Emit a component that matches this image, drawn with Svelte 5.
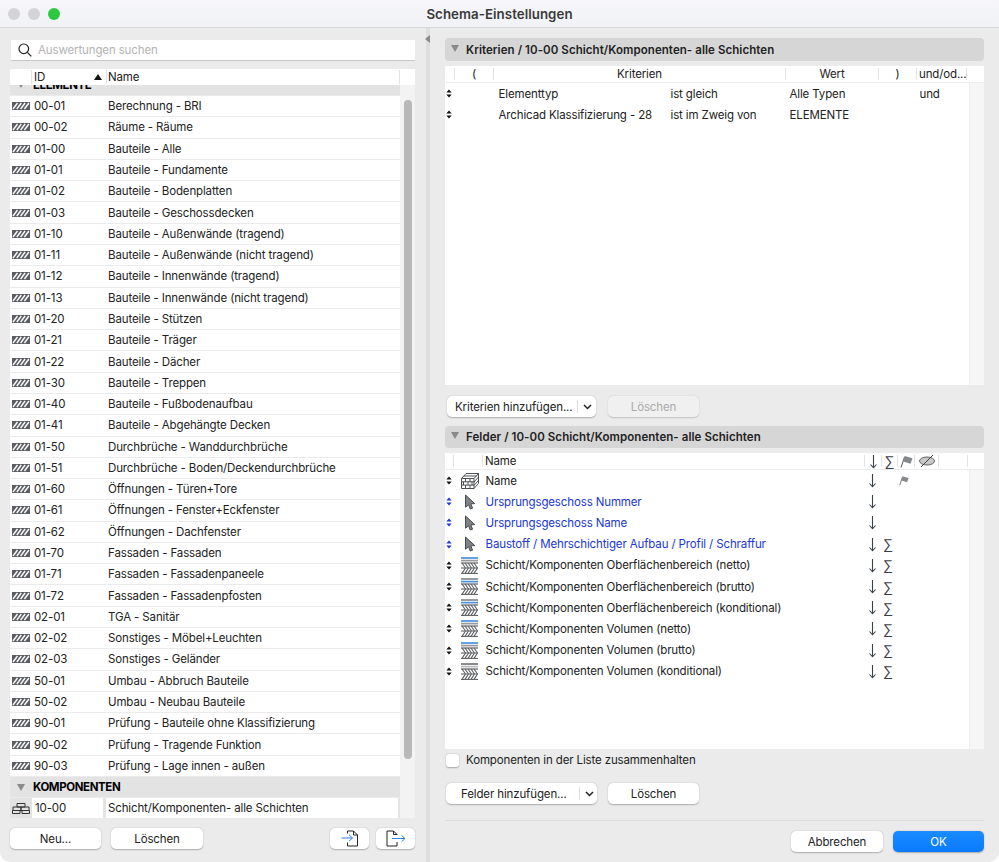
<script>
  const rows = [
    ['00-01','Berechnung - BRI'],['00-02','Räume - Räume'],['01-00','Bauteile - Alle'],['01-01','Bauteile - Fundamente'],
    ['01-02','Bauteile - Bodenplatten'],['01-03','Bauteile - Geschossdecken'],['01-10','Bauteile - Außenwände (tragend)'],
    ['01-11','Bauteile - Außenwände (nicht tragend)'],['01-12','Bauteile - Innenwände (tragend)'],['01-13','Bauteile - Innenwände (nicht tragend)'],
    ['01-20','Bauteile - Stützen'],['01-21','Bauteile - Träger'],['01-22','Bauteile - Dächer'],['01-30','Bauteile - Treppen'],
    ['01-40','Bauteile - Fußbodenaufbau'],['01-41','Bauteile - Abgehängte Decken'],['01-50','Durchbrüche - Wanddurchbrüche'],
    ['01-51','Durchbrüche - Boden/Deckendurchbrüche'],['01-60','Öffnungen - Türen+Tore'],['01-61','Öffnungen - Fenster+Eckfenster'],
    ['01-62','Öffnungen - Dachfenster'],['01-70','Fassaden - Fassaden'],['01-71','Fassaden - Fassadenpaneele'],['01-72','Fassaden - Fassadenpfosten'],
    ['02-01','TGA - Sanitär'],['02-02','Sonstiges - Möbel+Leuchten'],['02-03','Sonstiges - Geländer'],['50-01','Umbau - Abbruch Bauteile'],
    ['50-02','Umbau - Neubau Bauteile'],['90-01','Prüfung - Bauteile ohne Klassifizierung'],['90-02','Prüfung - Tragende Funktion'],['90-03','Prüfung - Lage innen - außen']
  ];
  const criteria = [
    ['Elementtyp','ist gleich','Alle Typen','und'],
    ['Archicad Klassifizierung - 28','ist im Zweig von','ELEMENTE','']
  ];
  const fields = [
    {n:'Name',icon:'brick',flag:true},
    {n:'Ursprungsgeschoss Nummer',icon:'cursor',blue:true},
    {n:'Ursprungsgeschoss Name',icon:'cursor',blue:true},
    {n:'Baustoff / Mehrschichtiger Aufbau / Profil / Schraffur',icon:'cursor',blue:true,sum:true},
    {n:'Schicht/Komponenten Oberflächenbereich (netto)',icon:'layer',top:'#4a90e2',mid:'#9a9a9a',sum:true},
    {n:'Schicht/Komponenten Oberflächenbereich (brutto)',icon:'layer',top:'#8a8a8a',mid:'#4a90e2',sum:true},
    {n:'Schicht/Komponenten Oberflächenbereich (konditional)',icon:'layer',top:'#8a8a8a',mid:'#4a90e2',sum:true},
    {n:'Schicht/Komponenten Volumen (netto)',icon:'layer',top:'#4a90e2',mid:'#9a9a9a',sum:true},
    {n:'Schicht/Komponenten Volumen (brutto)',icon:'layer',top:'#4a90e2',mid:'#9a9a9a',sum:true},
    {n:'Schicht/Komponenten Volumen (konditional)',icon:'layer',top:'#777',mid:'#bbb',sum:true}
  ];
</script>

{#snippet updown(color)}
  <svg class="updown" width="6" height="9" viewBox="0 0 6 9"><path d="M3 0.5 L5.7 3.6 H0.3 Z M3 8.5 L5.7 5.4 H0.3 Z" fill={color}/></svg>
{/snippet}
{#snippet down()}
  <svg width="9" height="15" viewBox="0 0 9 15"><path d="M4.5 1 V13.5 M1.5 10.5 L4.5 13.8 L7.5 10.5" fill="none" stroke="#3a4048" stroke-width="1.1"/></svg>
{/snippet}
{#snippet flag()}
  <svg width="13" height="13" viewBox="0 0 13 13"><path d="M1 12.5 L4.5 2" stroke="#444" stroke-width="0.9" fill="none"/><path d="M4.6 1 L12.5 3.2 L10.5 8.8 L3.2 6.5 Z" fill="#85888c"/></svg>
{/snippet}
{#snippet hatch()}
  <svg class="hatch" width="18" height="8" viewBox="0 0 18 8">
    <rect x="0" y="0" width="18" height="8" fill="#5a5d62"/>
    <path d="M1 7 L5.5 1 M4.8 7 L9.3 1 M8.6 7 L13.1 1 M12.4 7 L16.9 1" stroke="#f6f6f6" stroke-width="1.5"/>
  </svg>
{/snippet}
{#snippet layer(top, mid)}
  <svg width="17" height="17" viewBox="0 0 17 17">
    <path d="M0 1 H17" stroke={top} stroke-width="1.7"/>
    <path d="M0 3.6 H17" stroke={mid} stroke-width="1.7"/>
    <path d="M0 6 H17" stroke="#444" stroke-width="1"/>
    <path d="M0 11 H17 M0 16.4 H17" stroke="#555" stroke-width="1"/>
    <path d="M1 6 L4.5 11 M4 6 L7.5 11 M7 6 L10.5 11 M10 6 L13.5 11 M13 6 L16.5 11 M1 16.4 L4.5 11 M4 16.4 L7.5 11 M7 16.4 L10.5 11 M10 16.4 L13.5 11 M13 16.4 L16.5 11" stroke="#5c5f64" stroke-width="1.1"/>
  </svg>
{/snippet}
{#snippet cursor()}
  <svg width="12" height="16" viewBox="0 0 12 16"><path d="M1.5 1 L10.8 9.6 L6.8 9.8 L8.6 14.2 L6.2 15 L4.6 10.8 L1.5 13.2 Z" fill="#7f8387" stroke="#3c3f44" stroke-width="0.9" stroke-linejoin="round"/></svg>
{/snippet}
{#snippet brick()}
  <svg width="18" height="16" viewBox="0 0 18 16" fill="none" stroke="#3a3d42" stroke-width="0.9">
    <path d="M0.5 5.5 H13 V15.5 H0.5 Z M0.5 5.5 L5 0.5 H17.5 L13 5.5 M17.5 0.5 V10.5 L13 15.5"/>
    <path d="M0.5 8.8 H13 M0.5 12.1 H13 M4.5 5.5 V8.8 M9 5.5 V8.8 M2.5 8.8 V12.1 M7 8.8 V12.1 M11 8.8 V12.1 M4.5 12.1 V15.5 M9 12.1 V15.5 M3 3 H15.5 M13 9 L17.5 4 M13 12.4 L17.5 7.4"/>
  </svg>
{/snippet}

<div class="window">
  <header class="titlebar">
    <div class="lights"><i class="light off"></i><i class="light off"></i><i class="light green"></i></div>
    <div class="title">Schema-Einstellungen</div>
  </header>

  <div class="main">
    <section class="left">
      <div class="search">
        <svg width="14" height="14" viewBox="0 0 14 14" fill="none" stroke="#222" stroke-width="1.2"><circle cx="5.8" cy="5.8" r="4.8"/><path d="M9.3 9.3 L13.3 13.3"/></svg>
        <span>Auswertungen suchen</span>
      </div>

      <div class="list">
        <div class="list-head">
          <span class="lh-id">ID</span>
          <span class="lh-sort"><svg width="8" height="6" viewBox="0 0 8 6"><path d="M4 0 L8 6 H0 Z" fill="#111"/></svg></span>
          <span class="lh-name">Name</span>
        </div>
        <div class="list-body">
          <div class="list-main">
            <div class="scroller">
              <div class="group first"><span class="tri"></span><b>ELEMENTE</b></div>
              {#each rows as r}
                <div class="row">
                  <span class="ic">{@render hatch()}</span>
                  <span class="id">{r[0]}</span>
                  <span>{r[1]}</span>
                </div>
              {/each}
            </div>
            <div class="group"><span class="tri"></span><b>KOMPONENTEN</b></div>
            <div class="sel">
              <span class="sel-ic">
                <svg width="18" height="11" viewBox="0 0 18 11" fill="none" stroke="#333" stroke-width="1"><path d="M5 0.5 H13 V4 H5 Z M1 4 H9 V7.5 H1 Z M9 4 H17 V7.5 H9 Z M0.5 7.5 H8 V10.5 H0.5 Z M10 7.5 H17.5 V10.5 H10 Z"/></svg>
              </span>
              <span class="sel-id">10-00</span>
              <span class="sel-name">Schicht/Komponenten- alle Schichten</span>
            </div>
          </div>
          <div class="track"><div class="thumb"></div></div>
        </div>
      </div>

      <div class="left-actions">
        <button class="btn b-neu">Neu...</button>
        <button class="btn b-del">Löschen</button>
        <span class="spacer"></span>
        <button class="btn b-ic">
          <svg width="18" height="17" viewBox="0 0 18 17" fill="none"><path d="M6.5 3.5 V1 H12.5 L16.5 5 V16 H6.5 V12.5 M12.5 1 V5 H16.5" stroke="#222" stroke-width="1"/><path d="M0.5 8 H11.5 M8 4.8 L11.5 8 L8 11.2" stroke="#2f7fe8" stroke-width="1"/></svg>
        </button>
        <button class="btn b-ic">
          <svg width="20" height="17" viewBox="0 0 20 17" fill="none"><path d="M11 5 V4.5 L7.5 1 H1 V16 H11 V12 M7.5 1 V4.5 H11" stroke="#222" stroke-width="1"/><path d="M6 8.5 H19 M15.5 5.3 L19 8.5 L15.5 11.7" stroke="#2f7fe8" stroke-width="1"/></svg>
        </button>
      </div>
    </section>

    <div class="divider"><svg width="5" height="8" viewBox="0 0 5 8"><path d="M0 4 L5 0 V8 Z" fill="#8a8a8a"/></svg></div>

    <section class="right">
      <div class="bar"><span class="tri"></span><b>Kriterien / 10-00 Schicht/Komponenten- alle Schichten</b></div>
      <div class="table crit">
        <div class="thead chead">
          <span class="c"></span><span class="c ctr">(</span><span class="c ctr">Kriterien</span><span class="c ctr">Wert</span><span class="c ctr">)</span><span class="c und">und/od...</span><span class="c"></span>
        </div>
        <div class="tbody">
          <div class="tmain">
            {#each criteria as c}
              <div class="crow">
                <span class="h">{@render updown('#111')}</span>
                <span>{c[0]}</span><span>{c[1]}</span><span>{c[2]}</span><span>{c[3]}</span>
              </div>
            {/each}
          </div>
          <div class="strip"></div>
        </div>
      </div>
      <div class="actions a1">
        <div class="btn split s1"><span class="lbl">Kriterien hinzufügen...</span><i></i><svg width="9" height="6" viewBox="0 0 9 6"><path d="M1 1 L4.5 4.5 L8 1" fill="none" stroke="#222" stroke-width="1.5"/></svg></div>
        <button class="btn dis">Löschen</button>
      </div>

      <div class="bar b2"><span class="tri"></span><b>Felder / 10-00 Schicht/Komponenten- alle Schichten</b></div>
      <div class="table fields">
        <div class="thead fhead">
          <span class="c"></span><span class="c"></span><span class="c nm">Name</span>
          <span class="c mid">{@render down()}</span><span class="c mid sum">∑</span><span class="c mid">{@render flag()}</span>
          <span class="c mid">
            <svg width="18" height="14" viewBox="0 0 18 14"><ellipse cx="9" cy="7" rx="7.5" ry="4" fill="#c9c9c9" stroke="#555" stroke-width="0.9"/><path d="M3 13 L15 1" stroke="#444" stroke-width="1"/></svg>
          </span>
          <span class="c"></span><span class="c"></span>
        </div>
        <div class="tbody">
          <div class="tmain">
            {#each fields as f}
              <div class="frow" class:blue={f.blue}>
                <span class="h">{@render updown(f.blue ? '#2036d8' : '#111')}</span>
                <span class="fi">
                  {#if f.icon === 'brick'}{@render brick()}{:else if f.icon === 'cursor'}{@render cursor()}{:else}{@render layer(f.top, f.mid)}{/if}
                </span>
                <span class="fn">{f.n}</span>
                <span class="mid">{@render down()}</span>
                <span class="mid sum">{f.sum ? '∑' : ''}</span>
                <span class="mid">{#if f.flag}{@render flag()}{/if}</span>
              </div>
            {/each}
          </div>
          <div class="strip"></div>
        </div>
      </div>
      <label class="check"><i></i><span>Komponenten in der Liste zusammenhalten</span></label>
      <div class="actions a2">
        <div class="btn split s2"><span class="lbl">Felder hinzufügen...</span><i></i><svg width="9" height="6" viewBox="0 0 9 6"><path d="M1 1 L4.5 4.5 L8 1" fill="none" stroke="#222" stroke-width="1.5"/></svg></div>
        <button class="btn plain">Löschen</button>
      </div>
      <div class="sep"></div>
      <div class="footer">
        <button class="btn cancel">Abbrechen</button>
        <button class="btn ok">OK</button>
      </div>
    </section>
  </div>
</div>

<style>
  :global(body) { margin: 0; background: #fff; }
  .window {
    width: 999px; height: 862px; background: #ebebeb; border-radius: 0 0 10px 10px; overflow: hidden;
    display: flex; flex-direction: column; font-family: Inter, "Liberation Sans", sans-serif; font-size: 11.5px; letter-spacing: -0.13px; color: #222; box-sizing: border-box;
  }
  .titlebar {
    height: 28px; flex: none; box-sizing: border-box; background: linear-gradient(#f6f6f9, #f1f2f6); border-bottom: 1px solid #d6d6d6;
    display: flex; align-items: center; position: relative;
  }
  .lights { display: flex; gap: 8px; padding-left: 8px; }
  .light { width: 12px; height: 12px; border-radius: 50%; display: block; }
  .off { background: #d4d4d8; border: 0; }
  .green { background: #2cc840; }
  .title { position: absolute; left: 0; right: 0; text-align: center; font-weight: 600; font-size: 13.3px; letter-spacing: 0.05px; color: #3a3a3a; }
  .main { flex: 1; display: flex; min-height: 0; }

  .left { width: 426px; flex: none; box-sizing: border-box; padding: 12px 11px 0 10px; display: flex; flex-direction: column; }
  .search {
    height: 20px; margin-left: 1px; background: #fff; border-bottom: 1px solid #c8c8c8; box-sizing: content-box; display: flex; align-items: center; gap: 6px; padding-left: 7px;
    color: #b3b3b3;
  }
  .list { margin-top: 8px; width: 405px; }
  .list-head { height: 16px; background: #fff; display: grid; grid-template-columns: 22px 63px 11px 1fr; align-items: center; position: relative; }
  .lh-id { grid-column: 2; border-left: 1px solid #e2e2e2; padding-left: 2px; margin-left: -1px; }
  .lh-sort { grid-column: 3; display: flex; align-items: center; margin-left: -1px; }
  .lh-name { grid-column: 4; border-left: 1px solid #e2e2e2; padding-left: 1px; border-right: 1px solid #e2e2e2; margin-right: 15px; }
  .list-body { display: flex; height: 733px; }
  .list-main { width: 390px; display: flex; flex-direction: column; }
  .scroller { height: 692px; overflow: hidden; }
  .group { height: 20px; background: #e3e3e3; display: flex; align-items: center; gap: 8px; padding-left: 7px; font-size: 11.5px; color: #000; flex: none; }
  .group b { font-weight: 700; letter-spacing: -0.4px; }
  .group.first { margin-top: -11px; height: 21px; margin-bottom: 1px; }
  .tri { width: 0; height: 0; border-left: 4.5px solid transparent; border-right: 4.5px solid transparent; border-top: 7px solid #8a8a8a; display: block; flex: none; }
  .row {
    height: 20.29px; margin-bottom: 1px; background: #fff; display: grid; grid-template-columns: 24px 74px 1fr; align-items: center;
  }
  .ic { display: flex; padding-left: 2px; }
  .hatch { display: block; }
  .sel { height: 20px; margin-top: 1px; flex: none; display: grid; grid-template-columns: 22px 71px 295px; column-gap: 0; background: #e3e3e3; align-items: stretch; }
  .sel-ic { display: flex; align-items: center; justify-content: center; }
  .sel-id { background: #fff; padding-left: 3px; display: flex; align-items: center; }
  .sel-name { background: #fff; margin-left: 3px; padding-left: 2px; display: flex; align-items: center; }
  .track { width: 15px; background: #f3f3f3; position: relative; box-sizing: border-box; padding: 15px 3px 0 4px; }
  .thumb { height: 659px; background: #b9b9b9; border-radius: 4px; }

  .left-actions { display: flex; margin-top: 10px; align-items: center; width: 405px; }
  .btn {
    height: 21px; background: #fff; border: 0; border-radius: 5px; box-shadow: 0 0.5px 1.5px rgba(0,0,0,.28); font: inherit; letter-spacing: inherit; color: #222; padding: 0;
    display: flex; align-items: center; justify-content: center; box-sizing: border-box;
  }
  .b-neu { width: 91px; }
  .b-del { width: 92px; margin-left: 10px; }
  .spacer { flex: 1; }
  .b-ic { width: 39px; margin-left: 7px; }

  .divider { width: 4px; flex: none; background: #dedede; position: relative; }
  .divider svg { position: absolute; left: -1px; top: 7px; }

  .right { flex: 1; box-sizing: border-box; padding: 10px 15px 0 15px; display: flex; flex-direction: column; min-width: 0; }
  .bar { height: 23px; flex: none; background: #d6d6d6; border-radius: 4px; display: flex; align-items: center; gap: 7px; padding-left: 6px; color: #222; }
  .bar b { font-weight: 600; letter-spacing: 0.07px; }
  .bar .tri { margin-top: -3px; }
  .table { display: flex; flex-direction: column; margin-top: 5px; flex: none; }
  .thead { height: 16px; background: #fff; display: grid; align-items: center; flex: none; }
  .c { border-left: 1px solid #e2e2e2; height: 12px; display: flex; align-items: center; box-sizing: border-box; white-space: nowrap; }
  .c:first-child { border-left: 0; }
  .ctr { justify-content: center; }
  .und { padding-left: 2px; }
  .chead { grid-template-columns: 9px 39px 292px 93px 38px 50px 18px; }
  .tbody { display: flex; flex: 1; min-height: 0; border-top: 1px solid #ececec; }
  .tmain { flex: 1; background: #fff; min-width: 0; }
  .strip { width: 15px; background: #f6f6f6; border-left: 1px solid #ececec; box-sizing: border-box; }
  .crit .tbody { height: 302px; flex: none; }
  .crow { height: 21.3px; display: grid; grid-template-columns: 53.5px 172px 119px 130px 1fr; align-items: center; }
  .h { display: flex; padding-left: 1px; }
  .updown { display: block; }
  .actions { display: flex; flex: none; align-items: center; }
  .a1 { margin-top: 11px; margin-left: 2px; }
  .split { display: flex; align-items: center; justify-content: flex-start; }
  .split i { width: 1px; height: 13px; background: #ddd; display: block; }
  .split svg { margin-left: 5px; }
  .s1 { width: 149px; padding-left: 8px; }
  .s1 .lbl { width: 122px; }
  .dis { width: 91px; margin-left: 12px; background: #f0f0f0; color: #aaa; box-shadow: 0 0.5px 1.5px rgba(0,0,0,.18); }
  .b2 { margin-top: 9px; height: 22px; }
  .fields .tbody { height: 279px; flex: none; }
  .fhead { grid-template-columns: 8px 29px 382px 17px 16px 17px 24px 29px 16px; }
  .nm { padding-left: 2px; }
  .frow { height: 21.2px; display: grid; grid-template-columns: 16px 18px 388px 10px 22px 10px; align-items: center; }
  .frow.blue .fn { color: #2036d8; }
  .fi { display: flex; align-items: center; justify-content: center; margin-left: -1px; }
  .fn { padding-left: 6.5px; white-space: nowrap; overflow: visible; }
  .mid { display: flex; justify-content: center; align-items: center; }
  .fhead .mid { border-left: 1px solid #e2e2e2; }
  .sum { font-family: "Liberation Sans", sans-serif; font-size: 14px; color: #3a4048; }
  .check { display: flex; align-items: center; gap: 7px; margin-top: 4px; height: 14px; }
  .check i { width: 13px; height: 13px; background: #fff; border-radius: 3px; box-shadow: 0 0.5px 1.5px rgba(0,0,0,.3); display: block; margin-left: 1px; }
  .a2 { margin-top: 16px; margin-left: 1px; }
  .s2 { width: 151px; padding-left: 15px; }
  .s2 .lbl { width: 118px; }
  .plain { width: 91px; margin-left: 11px; }
  .sep { height: 1px; background: #dcdcdc; margin-top: 16px; flex: none; }
  .footer { display: flex; justify-content: flex-end; gap: 10px; margin-top: 10px; flex: none; }
  .cancel { width: 92px; }
  .ok { width: 91px; background: linear-gradient(#1a8cff, #0a7aff); color: #fff; }
</style>
